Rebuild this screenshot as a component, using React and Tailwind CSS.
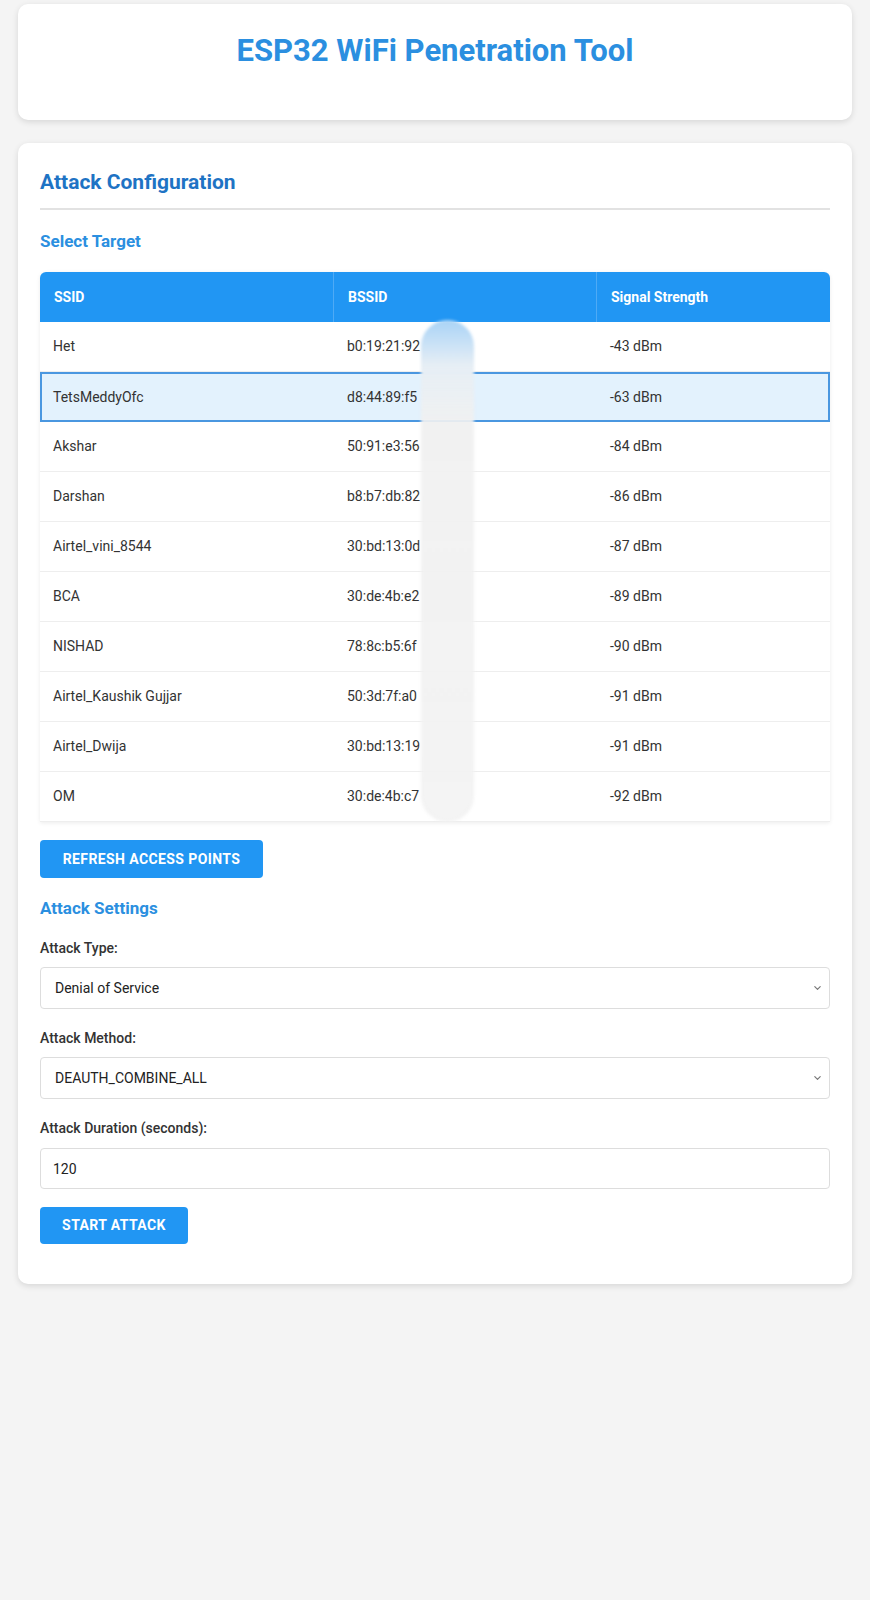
import { useState } from "react";

const networks = [
  ["Het", "b0:19:21:92", "-43 dBm"],
  ["TetsMeddyOfc", "d8:44:89:f5", "-63 dBm"],
  ["Akshar", "50:91:e3:56", "-84 dBm"],
  ["Darshan", "b8:b7:db:82", "-86 dBm"],
  ["Airtel_vini_8544", "30:bd:13:0d", "-87 dBm"],
  ["BCA", "30:de:4b:e2", "-89 dBm"],
  ["NISHAD", "78:8c:b5:6f", "-90 dBm"],
  ["Airtel_Kaushik Gujjar", "50:3d:7f:a0", "-91 dBm"],
  ["Airtel_Dwija", "30:bd:13:19", "-91 dBm"],
  ["OM", "30:de:4b:c7", "-92 dBm"],
];

function Chevron() {
  return (
    <svg className="pointer-events-none absolute right-[8px] top-1/2 -translate-y-1/2" width="9" height="9" viewBox="0 0 10 10" fill="none">
      <path d="M2 3.5 5 6.5 8 3.5" stroke="#777" strokeWidth="1.3" strokeLinecap="round" strokeLinejoin="round" />
    </svg>
  );
}

function App() {
  const [selected, setSelected] = useState(1);
  const [attackType, setAttackType] = useState("dos");
  const [method, setMethod] = useState("DEAUTH_COMBINE_ALL");
  const [duration, setDuration] = useState("120");

  return (
    <div className="min-h-[1600px] bg-[#f4f4f4] px-[18px] pt-[4px] font-['Roboto',sans-serif]">

      {/* Header */}
      <div className="h-[116px] rounded-[10px] bg-white pt-[29px] shadow-[0_2px_6px_rgba(0,0,0,0.12)]">
        <h1 className="text-center text-[31px] font-bold leading-[36px] text-[#2b8fe0]">
          ESP32 WiFi Penetration Tool
        </h1>
      </div>

      {/* Attack config card */}
      <div className="mt-[23px] rounded-[10px] bg-white px-[22px] pb-[40px] pt-[26px] shadow-[0_2px_6px_rgba(0,0,0,0.12)]">
        <h2 className="border-b-2 border-[#e2e2e2] pb-[13px] text-[21px] font-bold leading-[26px] text-[#1e73c4]">
          Attack Configuration
        </h2>

        <h3 className="mt-[21px] text-[17px] font-bold leading-[20px] text-[#2b8fe0]">Select Target</h3>

        {/* Table */}
        <div className="relative mt-[21px] overflow-hidden rounded-t-[6px] shadow-[0_1px_4px_rgba(0,0,0,0.08)]">
          <div className="grid h-[50px] grid-cols-[294px_263px_1fr] bg-[#2196f3] text-[14px] font-bold text-white">
            <div className="flex items-center border-r border-[#4eaaf5] px-[14px]">SSID</div>
            <div className="flex items-center border-r border-[#4eaaf5] px-[14px]">BSSID</div>
            <div className="flex items-center px-[14px]">Signal Strength</div>
          </div>
          {networks.map((n, i) => (
            <div
              key={n[0]}
              onClick={() => setSelected(i)}
              className={
                i === selected
                  ? "grid h-[50px] cursor-pointer grid-cols-[294px_263px_1fr] bg-[#e3f2fd] text-[14px] text-[#333] shadow-[inset_0_0_0_2px_#4a97e0]"
                  : "grid h-[50px] cursor-pointer grid-cols-[294px_263px_1fr] border-b border-[#eeeeee] bg-white text-[14px] text-[#333]"
              }
            >
              <div className="flex items-center px-[13px]">{n[0]}</div>
              <div className="flex items-center px-[13px]">{n[1]}</div>
              <div className="flex items-center px-[13px]">{n[2]}</div>
            </div>
          ))}
          {/* redaction blur */}
          <div className="absolute left-[381px] top-[48px] h-[502px] w-[53px] rounded-full bg-[linear-gradient(to_bottom,#a9d3f6_0%,#e6eef5_9%,rgba(240,240,240,0.92)_20%,rgba(242,242,242,0.9)_100%)] blur-[1.5px]" />
        </div>

        <button className="mt-[18px] h-[38px] w-[223px] rounded-[4px] bg-[#2196f3] text-[14px] font-bold tracking-[0.4px] text-white">
          REFRESH ACCESS POINTS
        </button>

        <h3 className="mt-[20px] text-[17px] font-bold leading-[20px] text-[#2b8fe0]">Attack Settings</h3>

        <label className="mt-[22px] block text-[14px] font-medium leading-[17px] text-[#333]">Attack Type:</label>
        <div className="relative mt-[10px]">
          <select
            value={attackType}
            onChange={(e) => setAttackType(e.target.value)}
            className="h-[42px] w-full appearance-none rounded-[4px] border border-[#dddddd] bg-white px-[14px] text-[14px] text-[#222]"
          >
            <option value="dos">Denial of Service</option>
            <option value="handshake">Capture Handshake</option>
          </select>
          <Chevron />
        </div>

        <label className="mt-[21px] block text-[14px] font-medium leading-[17px] text-[#333]">Attack Method:</label>
        <div className="relative mt-[10px]">
          <select
            value={method}
            onChange={(e) => setMethod(e.target.value)}
            className="h-[42px] w-full appearance-none rounded-[4px] border border-[#dddddd] bg-white px-[14px] text-[14px] text-[#222]"
          >
            <option>DEAUTH_COMBINE_ALL</option>
            <option>DEAUTH_BROADCAST</option>
          </select>
          <Chevron />
        </div>

        <label className="mt-[21px] block text-[14px] font-medium leading-[17px] text-[#333]">Attack Duration (seconds):</label>
        <input
          value={duration}
          onChange={(e) => setDuration(e.target.value)}
          className="mt-[11px] h-[41px] w-full rounded-[4px] border border-[#dddddd] bg-white px-[12px] text-[14px] text-[#222] outline-none"
        />

        <button className="mt-[18px] h-[37px] w-[148px] rounded-[4px] bg-[#2196f3] text-[14px] font-bold tracking-[0.4px] text-white">
          START ATTACK
        </button>
      </div>
    </div>
  );
}

export default App;
